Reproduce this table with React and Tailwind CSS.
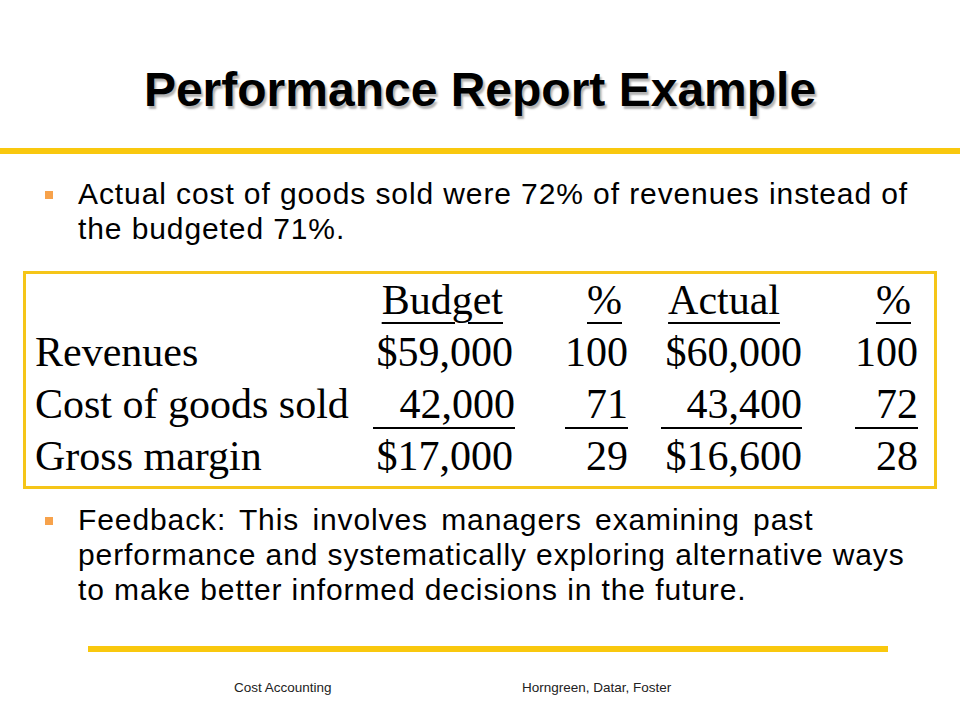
const YELLOW = "bg-[#f9c80e]";

const Bullet = ({ lines, className = "" }) => (
  <div className={`flex pl-[45px] ${className}`}>
    <div className="w-[8px] h-[8px] bg-[#f7a24b] mt-[15px] shrink-0" />
    <div className="ml-[25px] text-[30px] leading-[35px] tracking-[0.9px] text-black">
      {lines.map((line, i) => (
        <div key={i} className={`whitespace-nowrap ${line.spread ? "[word-spacing:4px]" : ""}`}>
          {line.text ?? line}
        </div>
      ))}
    </div>
  </div>
);

const rows = [
  { label: "Revenues", budget: "$59,000", bp: "100", actual: "$60,000", ap: "100" },
  { label: "Cost of goods sold", budget: "42,000", bp: "71", actual: "43,400", ap: "72", line: true },
  { label: "Gross margin", budget: "$17,000", bp: "29", actual: "$16,600", ap: "28" },
];

const u = "underline decoration-2 underline-offset-[8px]";

// underlined figure with a fixed-width rule, like the tab-underlined cells in the slide
const Ruled = ({ w, children }) => (
  <span className={`inline-block ${w} text-right leading-[46px] border-b-2 border-black`}>
    {children}
  </span>
);

export default function App() {
  return (
    <div className="w-[960px] h-[720px] bg-white overflow-hidden font-['Liberation_Sans',Arial,sans-serif]">
      {/* title */}
      <div className="pt-[63px] h-[148px]">
        <h1 className="text-center text-[48px] leading-[54px] font-bold text-black [text-shadow:2px_3px_2px_rgba(0,0,0,0.3)]">
          Performance Report Example
        </h1>
      </div>
      <div className={`h-[6px] ${YELLOW}`} />

      <Bullet
        className="mt-[22px]"
        lines={[
          "Actual cost of goods sold were 72% of revenues instead of",
          "the budgeted 71%.",
        ]}
      />

      {/* table */}
      <div className="ml-[23px] mt-[25px] w-[914px] border-[3px] border-[#f5c518] pl-[9px] pb-[4px] font-['Liberation_Serif','Times_New_Roman',serif] text-[42px] leading-[52px] text-black">
        <div className="grid grid-cols-[338px_140px_115px_174px_116px]">
          <div />
          <div className="text-right pr-[10px]"><span className={u}>Budget</span></div>
          <div className="text-right pr-[6px]"><span className={u}>%</span></div>
          <div className="text-right pr-[22px]"><span className={u}>Actual</span></div>
          <div className="text-right pr-[7px]"><span className={u}>%</span></div>
          {rows.map((r) =>
            r.line ? (
              <div key={r.label} className="contents">
                <div className="whitespace-nowrap">{r.label}</div>
                <div className="text-right"><Ruled w="w-[142px]">{r.budget}</Ruled></div>
                <div className="text-right"><Ruled w="w-[63px]">{r.bp}</Ruled></div>
                <div className="text-right"><Ruled w="w-[141px]">{r.actual}</Ruled></div>
                <div className="text-right"><Ruled w="w-[63px]">{r.ap}</Ruled></div>
              </div>
            ) : (
              <div key={r.label} className="contents">
                <div className="whitespace-nowrap">{r.label}</div>
                <div className="text-right whitespace-nowrap">{r.budget}</div>
                <div className="text-right whitespace-nowrap">{r.bp}</div>
                <div className="text-right whitespace-nowrap">{r.actual}</div>
                <div className="text-right whitespace-nowrap">{r.ap}</div>
              </div>
            )
          )}
        </div>
      </div>

      <Bullet
        className="mt-[13px]"
        lines={[
          { text: "Feedback: This involves managers examining past", spread: true },
          "performance and systematically exploring alternative ways",
          "to make better informed decisions in the future.",
        ]}
      />

      <div className={`ml-[88px] mt-[39px] w-[800px] h-[6px] ${YELLOW}`} />

      <div className="mt-[26px] h-[20px] text-[13.5px] leading-[20px] text-[#222]">
        <div className="flex">
          <span className="ml-[234px] w-[288px]">Cost Accounting</span>
          <span>Horngreen, Datar, Foster</span>
        </div>
      </div>
    </div>
  );
}
